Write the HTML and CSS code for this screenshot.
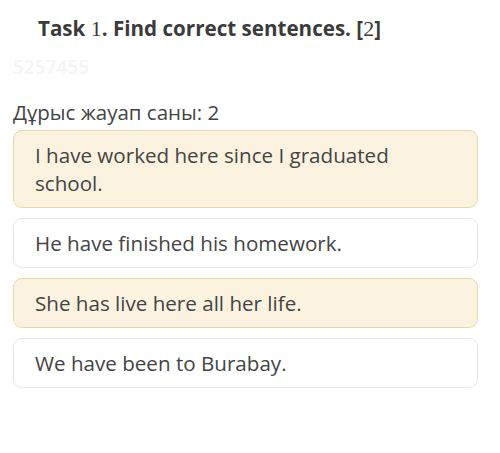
FILE: index.html
```html
<!DOCTYPE html>
<html lang="en">
<head>
  <meta charset="UTF-8">
  <meta name="viewport" content="width=device-width, initial-scale=1.0">
  <title>Task 1</title>
  <link rel="stylesheet" href="styles.css">
</head>
<body>
  <div class="page">
    <h2 class="task-title">Task <span class="num">1</span>. Find correct sentences. [<span class="num">2</span>]</h2>
    <div class="ghost-id">5257455</div>
    <p class="answer-count">Дұрыс жауап саны: 2</p>

    <ul class="options">
      <li class="option selected">I have worked here since I graduated school.</li>
      <li class="option">He have finished his homework.</li>
      <li class="option selected">She has live here all her life.</li>
      <li class="option">We have been to Burabay.</li>
    </ul>
  </div>
</body>
</html>
```

FILE: styles.css
```css
body {
  margin: 0;
  background: #ffffff;
  font-family: 'Open Sans', 'Noto Sans', Arial, sans-serif;
  color: #444444;
}

.page {
  padding: 0 22px 0 13px;
}

.task-title {
  margin: 0;
  padding: 14px 0 0 25px;
  font-size: 20.6px;
  line-height: 28px;
  font-weight: 700;
  color: #3b3b3b;
}

.task-title .num {
  font-family: 'Liberation Serif', 'Times New Roman', serif;
  font-weight: 400;
  font-size: 22px;
}

.ghost-id {
  margin-top: 12px;
  font-size: 19px;
  line-height: 24px;
  font-weight: 600;
  color: #f4f4f4;
}

.answer-count {
  margin: 20px 0 0;
  font-size: 20.5px;
  line-height: 26px;
  color: #444444;
}

.options {
  list-style: none;
  margin: 5px 0 0;
  padding: 0;
  display: flex;
  flex-direction: column;
  gap: 10px;
}

.option {
  padding: 10px 24px 10px 21px;
  border: 1px solid #e4e8ec;
  border-radius: 9px;
  background: #ffffff;
  font-size: 20.6px;
  line-height: 28px;
  color: #444444;
}

.option.selected {
  background: #fbf3e0;
  border-color: #e8d8a8;
}
```
